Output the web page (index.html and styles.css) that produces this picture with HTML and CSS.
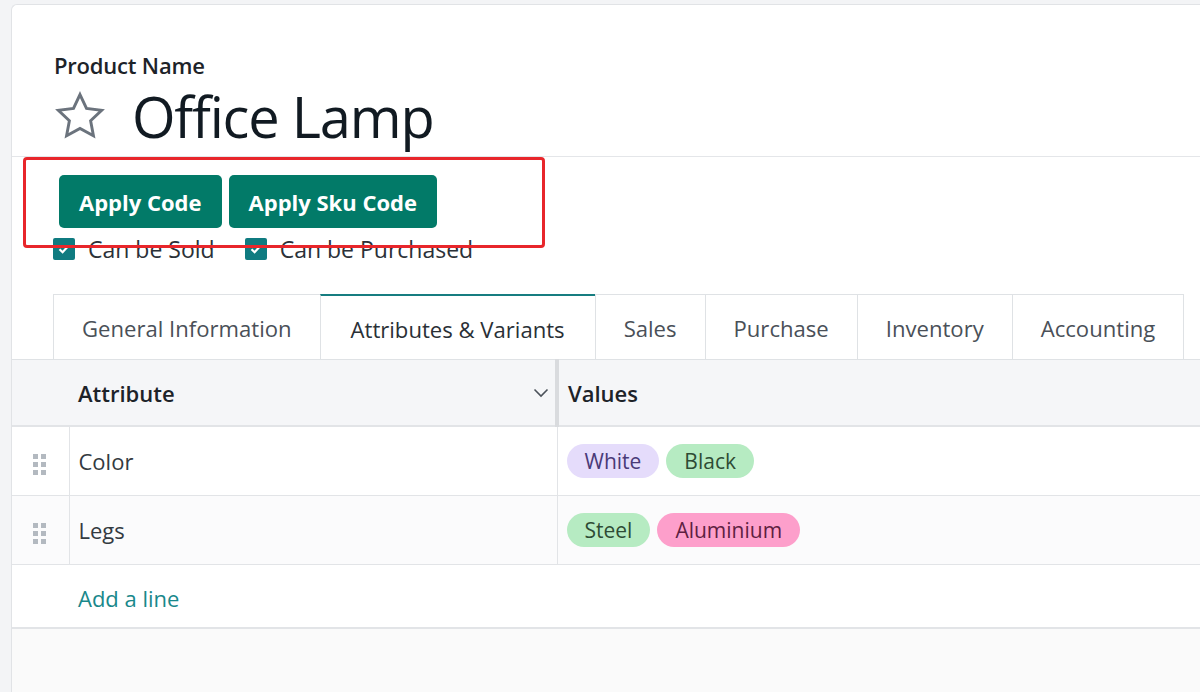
FILE: index.html
```html
<!DOCTYPE html>
<html lang="en">
<head>
  <meta charset="UTF-8">
  <title>Office Lamp</title>
  <link rel="stylesheet" href="styles.css">
</head>
<body>
  <div class="sheet">
    <div class="title-block">
      <div class="field-label">Product Name</div>
      <div class="name-row">
        <svg class="star" width="52" height="50" viewBox="0 0 24 23">
          <polygon points="12,1.6 15,8 22,8.9 16.9,13.7 18.2,20.6 12,17.2 5.8,20.6 7.1,13.7 2,8.9 9,8" fill="none" stroke="#6b737d" stroke-width="1.35" stroke-linejoin="miter"/>
        </svg>
        <h1>Office Lamp</h1>
      </div>
    </div>

    <div class="actions">
      <button class="btn">Apply Code</button>
      <button class="btn">Apply Sku Code</button>
    </div>

    <div class="options">
      <label class="check">
        <span class="box"><svg width="14" height="14" viewBox="0 0 14 14"><path d="M2.5 7.2 L5.6 10.2 L11.5 3.8" fill="none" stroke="#fff" stroke-width="2.2"/></svg></span>
        Can be Sold
      </label>
      <label class="check">
        <span class="box"><svg width="14" height="14" viewBox="0 0 14 14"><path d="M2.5 7.2 L5.6 10.2 L11.5 3.8" fill="none" stroke="#fff" stroke-width="2.2"/></svg></span>
        Can be Purchased
      </label>
    </div>

    <div class="tabs">
      <div class="tab">General Information</div>
      <div class="tab active">Attributes &amp; Variants</div>
      <div class="tab">Sales</div>
      <div class="tab">Purchase</div>
      <div class="tab">Inventory</div>
      <div class="tab">Accounting</div>
    </div>

    <table class="lines">
      <thead>
        <tr>
          <th class="col-handle"></th>
          <th class="col-attr">
            <div class="th-inner">
              <span>Attribute</span>
              <svg width="16" height="10" viewBox="0 0 16 10"><path d="M1.5 1.5 L8 8 L14.5 1.5" fill="none" stroke="#4b525a" stroke-width="1.6"/></svg>
            </div>
          </th>
          <th class="col-values">Values</th>
        </tr>
      </thead>
      <tbody>
        <tr>
          <td class="col-handle"><span class="handle"><i></i><i></i><i></i><i></i><i></i><i></i></span></td>
          <td class="col-attr">Color</td>
          <td class="col-values"><span class="tag tag-purple">White</span><span class="tag tag-green">Black</span></td>
        </tr>
        <tr class="alt">
          <td class="col-handle"><span class="handle"><i></i><i></i><i></i><i></i><i></i><i></i></span></td>
          <td class="col-attr">Legs</td>
          <td class="col-values"><span class="tag tag-green">Steel</span><span class="tag tag-pink">Aluminium</span></td>
        </tr>
        <tr class="add-row">
          <td colspan="3"><a class="add-line">Add a line</a></td>
        </tr>
      </tbody>
    </table>

    <div class="rest"></div>
  </div>

  <div class="highlight"></div>
</body>
</html>
```

FILE: styles.css
```css
body {
  margin: 0;
  background-color: #f3f4f6;
  font-family: "Open Sans", "Noto Sans", sans-serif;
  color: #1d2329;
  overflow: hidden;
}

.sheet {
  margin: 4px 0 0 11px;
  background: #fff;
  border: 1px solid #e1e3e6;
  border-right: none;
  border-radius: 6px 0 0 0;
}

.title-block {
  padding: 44px 0 5px 42px;
  border-bottom: 1px solid #e4e6e9;
}

.field-label {
  font-size: 22px;
  font-weight: 600;
  line-height: 32px;
  letter-spacing: -0.2px;
}

.name-row {
  display: flex;
  align-items: center;
  gap: 26px;
}

.name-row h1 {
  margin: 0;
  font-size: 56px;
  font-weight: 400;
  line-height: 70px;
  letter-spacing: -1.2px;
  color: #111a22;
}

.actions {
  display: flex;
  gap: 7px;
  margin: 18px 0 0 47px;
}

.btn {
  height: 53px;
  padding: 0 20px;
  background-color: #027a68;
  color: #fff;
  border: none;
  border-radius: 5px;
  font-family: inherit;
  font-size: 22px;
  font-weight: 700;
  cursor: pointer;
}

.options {
  display: flex;
  gap: 30px;
  margin-top: 9px;
  padding-left: 41px;
}

.check {
  display: flex;
  align-items: center;
  gap: 13px;
  font-size: 23px;
  line-height: 24px;
  color: #2b3138;
}

.box {
  display: flex;
  align-items: center;
  justify-content: center;
  width: 22px;
  height: 22px;
  background-color: #0f7b80;
  border-radius: 2px;
}

.tabs {
  display: flex;
  margin-top: 33px;
  padding-left: 41px;
}

.tab {
  height: 61px;
  line-height: 61px;
  padding: 3px 28px 0;
  border: 1px solid #dfe2e5;
  border-bottom: none;
  margin-right: -1px;
  font-size: 22.1px;
  color: #4a5058;
}

.tab.active {
  border-top: 2px solid #167d80;
  height: 60px;
  line-height: 60px;
  padding: 3px 30px 0;
  color: #2a3036;
}

.lines {
  width: 100%;
  border-collapse: collapse;
  font-size: 22px;
}

.lines thead tr {
  background-color: #f5f6f8;
  border-top: 1px solid #dfe2e5;
  border-bottom: 2px solid #e2e4e7;
}

.lines th {
  height: 65px;
  padding: 0 0 0 9px;
  text-align: left;
  font-weight: 600;
  color: #1d2329;
}

.lines th.col-handle {
  width: 48px;
}

.lines th.col-attr {
  width: 471px;
  border-right: 4px solid #d9dbde;
  padding-right: 6px;
}

.th-inner {
  display: flex;
  align-items: center;
  justify-content: space-between;
}

.lines td {
  height: 68px;
  padding: 0 0 0 9px;
  border-bottom: 1px solid #e2e4e7;
  color: #333a41;
}

.lines td.col-handle,
.lines td.col-attr {
  border-right: 1px solid #e2e4e7;
}

.lines td.col-handle {
  text-align: center;
  padding: 0;
}

.lines tr.alt td {
  background-color: #fbfbfc;
}

.handle {
  display: inline-grid;
  grid-template-columns: 5px 5px;
  gap: 3px;
  vertical-align: middle;
  margin-right: 2px;
}

.handle i {
  width: 5px;
  height: 5px;
  background-color: #b3b9c0;
}

.tag {
  display: inline-block;
  height: 34px;
  line-height: 34px;
  padding: 0 18px;
  margin-right: 7px;
  border-radius: 17px;
  font-size: 21px;
}

.tag-purple {
  background-color: #e5dcfb;
  color: #4a3a78;
}

.tag-green {
  background-color: #b6ebc2;
  color: #2e4b35;
}

.tag-pink {
  background-color: #fd9fcb;
  color: #5e1f42;
}

.lines tr.add-row td {
  height: 58px;
  padding: 4px 0 0 66px;
  border-bottom: 2px solid #e2e4e7;
}

.add-line {
  color: #19888b;
  cursor: pointer;
}

.rest {
  height: 120px;
  background-color: #fafafa;
}

.highlight {
  position: absolute;
  left: 23px;
  top: 157px;
  width: 522px;
  height: 91px;
  box-sizing: border-box;
  border: 3px solid #e8262b;
  border-radius: 4px;
}
```
